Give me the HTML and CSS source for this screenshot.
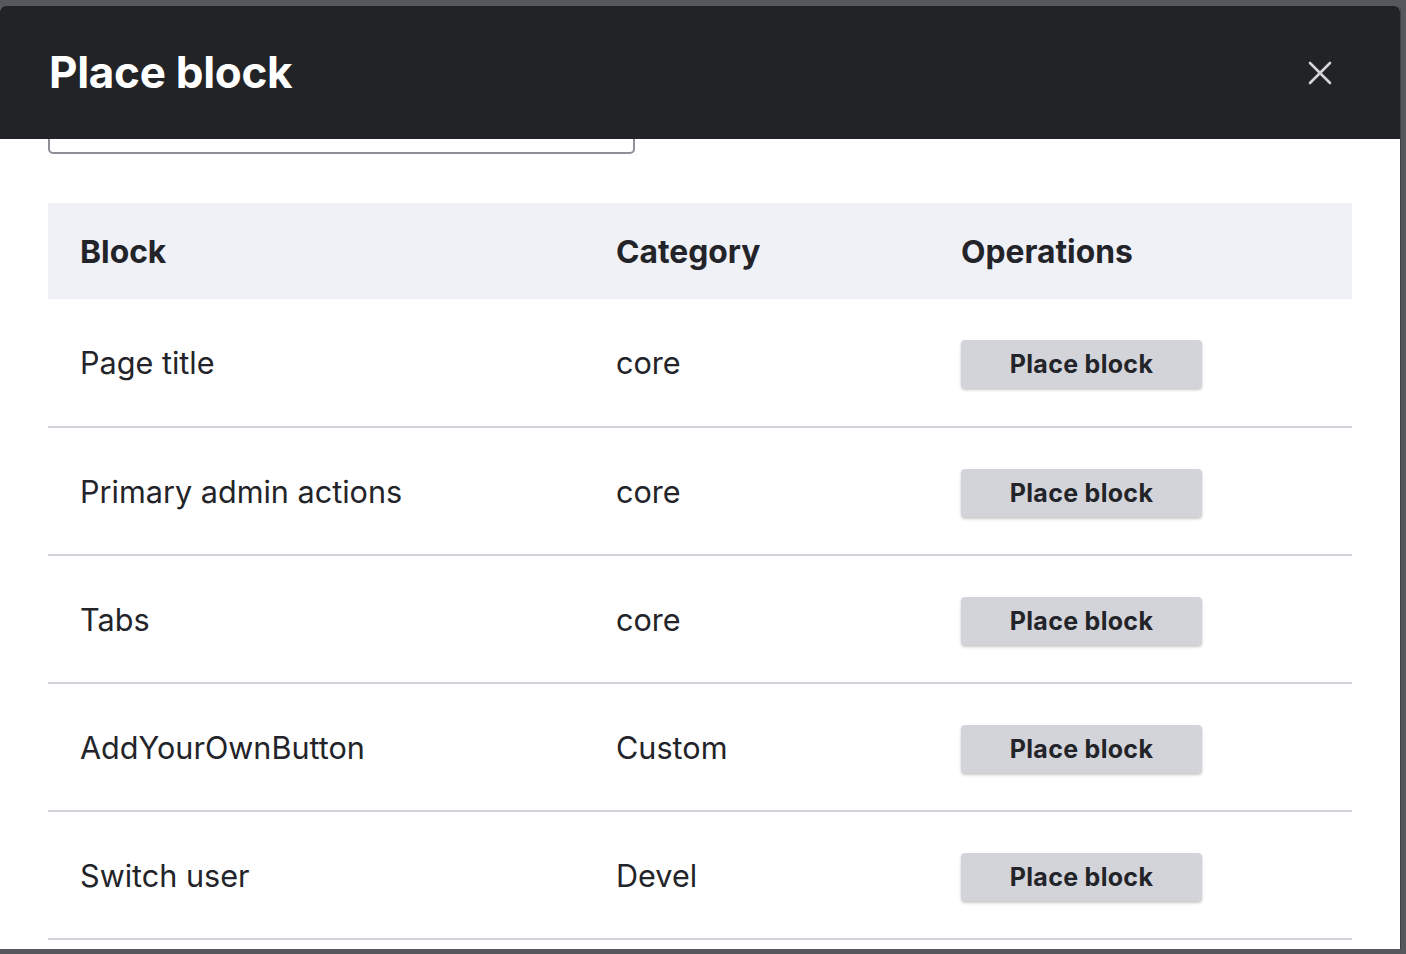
FILE: index.html
```html
<!DOCTYPE html>
<html>
<head>
<meta charset="utf-8">
<link rel="stylesheet" href="styles.css">
</head>
<body>
<div class="backdrop">
  <div class="dialog">
    <div class="dialog-header">
      <h1 class="dialog-title">Place block</h1>
      <button class="close" aria-label="Close">
        <svg width="24" height="24" viewBox="0 0 24 24"><path d="M2 2 L22 22 M22 2 L2 22" stroke="#d4d4d8" stroke-width="2.6" stroke-linecap="round" fill="none"/></svg>
      </button>
    </div>
    <div class="dialog-body">
      <div class="search"></div>
      <table class="blocks">
        <thead>
          <tr><th class="c1">Block</th><th class="c2">Category</th><th class="c3">Operations</th></tr>
        </thead>
        <tbody>
          <tr><td>Page title</td><td>core</td><td><button class="place">Place block</button></td></tr>
          <tr><td>Primary admin actions</td><td>core</td><td><button class="place">Place block</button></td></tr>
          <tr><td>Tabs</td><td>core</td><td><button class="place">Place block</button></td></tr>
          <tr><td>AddYourOwnButton</td><td>Custom</td><td><button class="place">Place block</button></td></tr>
          <tr><td>Switch user</td><td>Devel</td><td><button class="place">Place block</button></td></tr>
        </tbody>
      </table>
    </div>
  </div>
</div>
</body>
</html>
```

FILE: styles.css
```css
html, body {
  margin: 0;
  padding: 0;
  height: 100%;
  overflow: hidden;
}
body {
  background: #56575c;
  font-family: Inter, "Liberation Sans", sans-serif;
  color: #232429;
}
.backdrop {
  padding-top: 6px;
  height: 954px;
  box-sizing: border-box;
}
.dialog {
  width: 1400px;
  height: 943px;
  background: #fff;
  border-radius: 5px 5px 0 0;
  display: flex;
  flex-direction: column;
  overflow: hidden;
  box-shadow: 1px 0 0 #3f4045;
}
.dialog-header {
  height: 133px;
  flex: none;
  background: #222327;
  display: flex;
  align-items: center;
  justify-content: space-between;
  padding: 0 68px 0 49px;
  position: relative;
  z-index: 1;
}
.dialog-title {
  margin: 0;
  margin-top: -2px;
  color: #fff;
  font-size: 44px;
  font-weight: 700;
  letter-spacing: -0.3px;
}
.close {
  background: none;
  border: 0;
  padding: 0;
  width: 24px;
  height: 24px;
  margin-top: 1px;
}
.dialog-body {
  flex: 1;
  overflow: hidden;
  padding: 0 48px;
}
.search {
  width: 587px;
  height: 40px;
  margin-top: -25px;
  box-sizing: border-box;
  border: 2px solid #8e9098;
  border-radius: 5px;
}
.blocks {
  margin-top: 49px;
  width: 1304px;
  border-collapse: collapse;
  font-size: 30.6px;
}
.blocks th {
  background: #f0f1f6;
  text-align: left;
  font-weight: 700;
  font-size: 31.8px;
  height: 96px;
  padding: 0 0 0 32px;
  box-sizing: border-box;
}
.c1 { width: 536px; }
.c2 { width: 345px; }
.blocks td {
  height: 128px;
  padding: 0 0 0 32px;
  box-sizing: border-box;
  border-bottom: 2px solid #d3d4d9;
  vertical-align: middle;
}
.place {
  font-family: Inter, "Liberation Sans", sans-serif;
  font-size: 25px;
  font-weight: 700;
  color: #232429;
  background: #d3d4d9;
  border: 0;
  border-radius: 4px;
  width: 241px;
  height: 48px;
  margin-top: 3px;
  box-shadow: 0 2px 3px rgba(0, 0, 0, 0.22);
  letter-spacing: 0.3px;
}
```
